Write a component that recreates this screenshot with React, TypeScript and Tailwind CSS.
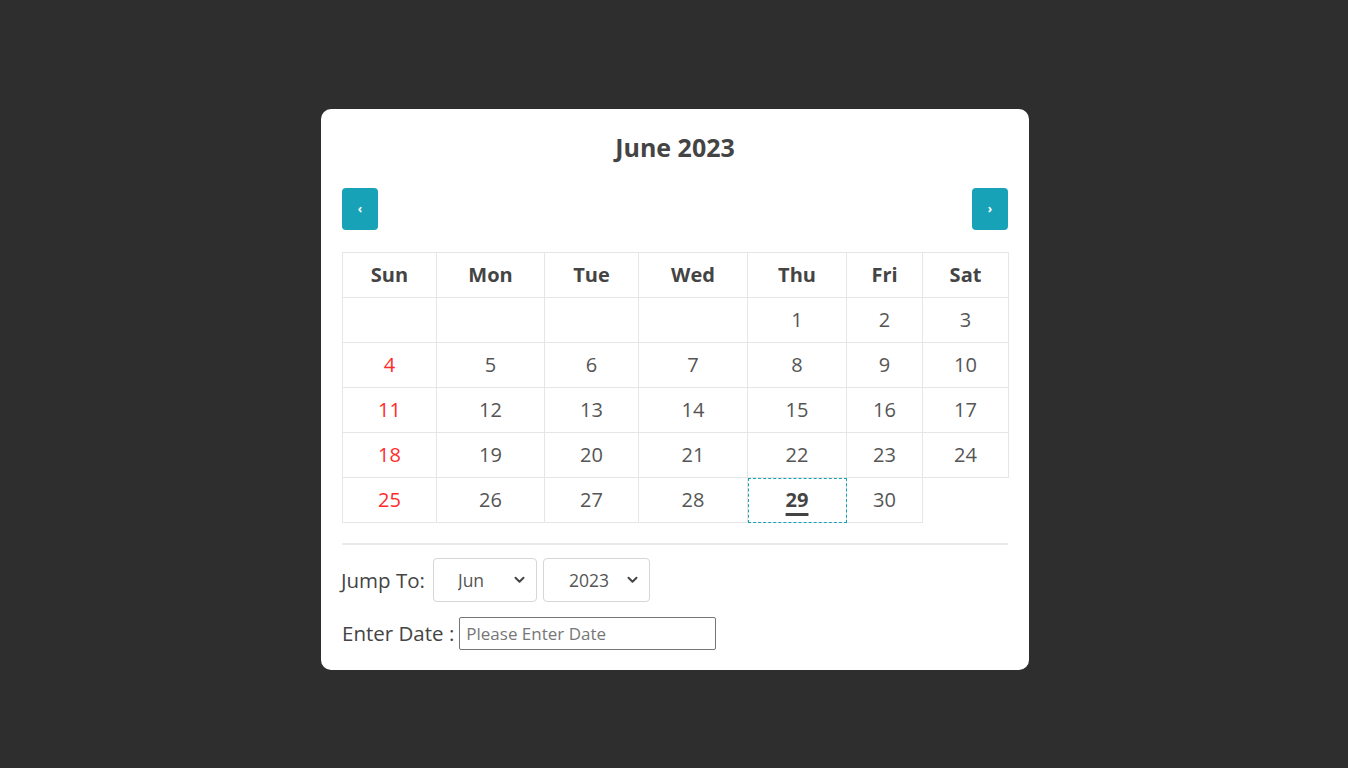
import React from 'react';

const days = ['Sun', 'Mon', 'Tue', 'Wed', 'Thu', 'Fri', 'Sat'];
const colWidths = ['w-[94px]', 'w-[108px]', 'w-[94px]', 'w-[109px]', 'w-[99px]', 'w-[76px]', 'w-[86px]'];

// June 2023 starts on Thursday
const weeks: (number | null)[][] = [
  [null, null, null, null, 1, 2, 3],
  [4, 5, 6, 7, 8, 9, 10],
  [11, 12, 13, 14, 15, 16, 17],
  [18, 19, 20, 21, 22, 23, 24],
  [25, 26, 27, 28, 29, 30],
];

const Chevron: React.FC = () => (
  <svg
    className="pointer-events-none absolute right-[12px] top-1/2 -translate-y-1/2"
    width="11"
    height="8"
    viewBox="0 0 11 8"
    fill="none"
  >
    <path d="M1.5 1.8 5.5 5.8 9.5 1.8" stroke="#444" strokeWidth="2" strokeLinecap="round" strokeLinejoin="round" />
  </svg>
);

const App: React.FC = () => {
  return (
    <div
      className="min-h-screen w-full bg-[#2e2e2e] flex items-start justify-center pt-[109px] pl-[2px]"
      style={{ fontFamily: '"Open Sans", sans-serif' }}
    >
      <div className="w-[708px] bg-white rounded-[10px] px-[21px] pt-[21px] pb-[20px] text-[#444]">
        <h2 className="text-center text-[25px] font-bold leading-[34px] text-[#444]">June 2023</h2>

        <div className="flex justify-between mt-[24px]">
          <button className="w-[36px] h-[42px] rounded-[4px] bg-[#17a2b8] text-white text-[12px] font-bold flex items-center justify-center">
            ‹
          </button>
          <button className="w-[36px] h-[42px] rounded-[4px] bg-[#17a2b8] text-white text-[12px] font-bold flex items-center justify-center">
            ›
          </button>
        </div>

        <table className="mt-[22px] w-[666px] table-fixed border-collapse">
          <thead>
            <tr className="h-[45px]">
              {days.map((d, i) => (
                <th
                  key={d}
                  className={`${colWidths[i]} border border-[#e6e6e6] text-[20px] font-bold text-[#444] text-center`}
                >
                  {d}
                </th>
              ))}
            </tr>
          </thead>
          <tbody>
            {weeks.map((week, wi) => (
              <tr key={wi} className="h-[45px]">
                {week.map((day, di) => {
                  const isToday = day === 29;
                  return (
                    <td
                      key={di}
                      className={`text-center text-[20px] border border-[#e6e6e6] ${
                        isToday ? 'outline-1 outline-dashed outline-[#17a2b8] -outline-offset-1' : ''
                      } ${di === 0 ? 'text-[#ff2b2b]' : 'text-[#555]'}`}
                    >
                      {isToday ? (
                        <span className="font-bold underline decoration-[3px] underline-offset-[6px] text-[#444]">
                          {day}
                        </span>
                      ) : (
                        day ?? ''
                      )}
                    </td>
                  );
                })}
              </tr>
            ))}
          </tbody>
        </table>

        <hr className="mt-[20px] border-t-2 border-[#e9e9e9]" />

        <div className="flex items-center mt-[13px]">
          <label className="text-[20.5px] text-[#444] mr-[8px] ml-[-1px]">Jump To:</label>
          <div className="relative">
            <select
              defaultValue="Jun"
              className="appearance-none w-[104px] h-[44px] border border-[#d6d6d6] rounded-[4px] text-[17.5px] text-[#555] pl-[24px] bg-white"
            >
              <option>Jun</option>
            </select>
            <Chevron />
          </div>
          <div className="relative ml-[6px]">
            <select
              defaultValue="2023"
              className="appearance-none w-[107px] h-[44px] border border-[#d6d6d6] rounded-[4px] text-[17.5px] text-[#555] pl-[25px] bg-white"
            >
              <option>2023</option>
            </select>
            <Chevron />
          </div>
        </div>

        <div className="flex items-center mt-[15px]">
          <label className="text-[20.5px] text-[#444] mr-[5px]">Enter Date :</label>
          <input
            type="text"
            placeholder="Please Enter Date"
            className="w-[257px] h-[33px] border border-[#767676] rounded-[2px] px-[6px] text-[17px] placeholder:text-[#777]"
          />
        </div>
      </div>
    </div>
  );
};

export default App;
